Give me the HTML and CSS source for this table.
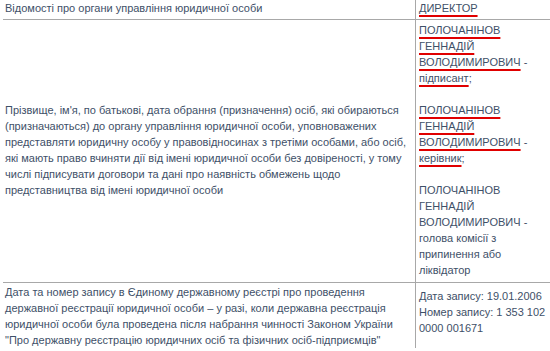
FILE: index.html
```html
<!DOCTYPE html>
<html lang="uk">
<head>
<meta charset="utf-8">
<title>Відомості</title>
<link rel="stylesheet" href="styles.css">
</head>
<body>
<table class="info">
  <tr class="r-head">
    <td class="c-left">Відомості про органи управління юридичної особи</td>
    <td class="c-right"><span class="mark">ДИРЕКТОР</span></td>
  </tr>
  <tr class="r-mid">
    <td class="c-left mid">Прізвище, ім'я, по батькові, дата обрання (призначення) осіб, які обираються<br>(призначаються) до органу управління юридичної особи, уповноважених<br>представляти юридичну особу у правовідносинах з третіми особами, або осіб,<br>які мають право вчиняти дії від імені юридичної особи без довіреності, у тому<br>числі підписувати договори та дані про наявність обмежень щодо<br>представництва від імені юридичної особи</td>
    <td class="c-right">
      <p class="person"><span class="mark">ПОЛОЧАНІНОВ</span><br><span class="mark">ГЕННАДІЙ</span><br><span class="mark">ВОЛОДИМИРОВИЧ</span> -<br><span class="mark">підписант</span>;</p>
      <p class="person"><span class="mark">ПОЛОЧАНІНОВ</span><br><span class="mark">ГЕННАДІЙ</span><br><span class="mark">ВОЛОДИМИРОВИЧ</span> -<br><span class="mark">керівник</span>;</p>
      <p class="person last">ПОЛОЧАНІНОВ<br>ГЕННАДІЙ<br>ВОЛОДИМИРОВИЧ -<br>голова комісії з<br>припинення або<br>ліквідатор</p>
    </td>
  </tr>
  <tr class="r-foot">
    <td class="c-left">Дата та номер запису в Єдиному державному реєстрі про проведення<br>державної реєстрації юридичної особи – у разі, коли державна реєстрація<br>юридичної особи була проведена після набрання чинності Законом України<br>"Про державну реєстрацію юридичних осіб та фізичних осіб-підприємців"</td>
    <td class="c-right foot">Дата запису: 19.01.2006<br>Номер запису: 1 353 102<br>0000 001671</td>
  </tr>
</table>
</body>
</html>
```
FILE: styles.css
```css
html, body {
  margin: 0;
  padding: 0;
  background: #ffffff;
  overflow: hidden;
}
body {
  padding-left: 3px;
  font-family: "Liberation Sans", Arial, sans-serif;
  font-size: 11px;
  line-height: 16px;
  color: #3e5068;
}
.info {
  border-collapse: collapse;
  width: 560px;
  table-layout: fixed;
}
.info td {
  vertical-align: top;
  white-space: nowrap;
}
.c-left {
  width: 408px;
  padding: 0 2px;
  border-right: 1px solid #a8a8a8;
}
.c-right {
  padding: 0 3px;
}
.r-head td {
  padding-top: 0;
  padding-bottom: 3px;
  border-bottom: 1px solid #a8a8a8;
}
.r-mid td {
  padding-top: 2px;
  padding-bottom: 4px;
  border-bottom: 1px solid #a8a8a8;
}
.r-mid .mid {
  vertical-align: middle;
}
.r-foot td {
  padding-top: 1px;
}
.r-foot .foot {
  padding-top: 5px;
}
.person {
  margin: 0 0 16px;
}
.person.last {
  margin-bottom: 0;
}
.mark {
  text-decoration: underline;
  text-decoration-color: #e00000;
  text-decoration-thickness: 2px;
  text-underline-offset: 3px;
}
```
